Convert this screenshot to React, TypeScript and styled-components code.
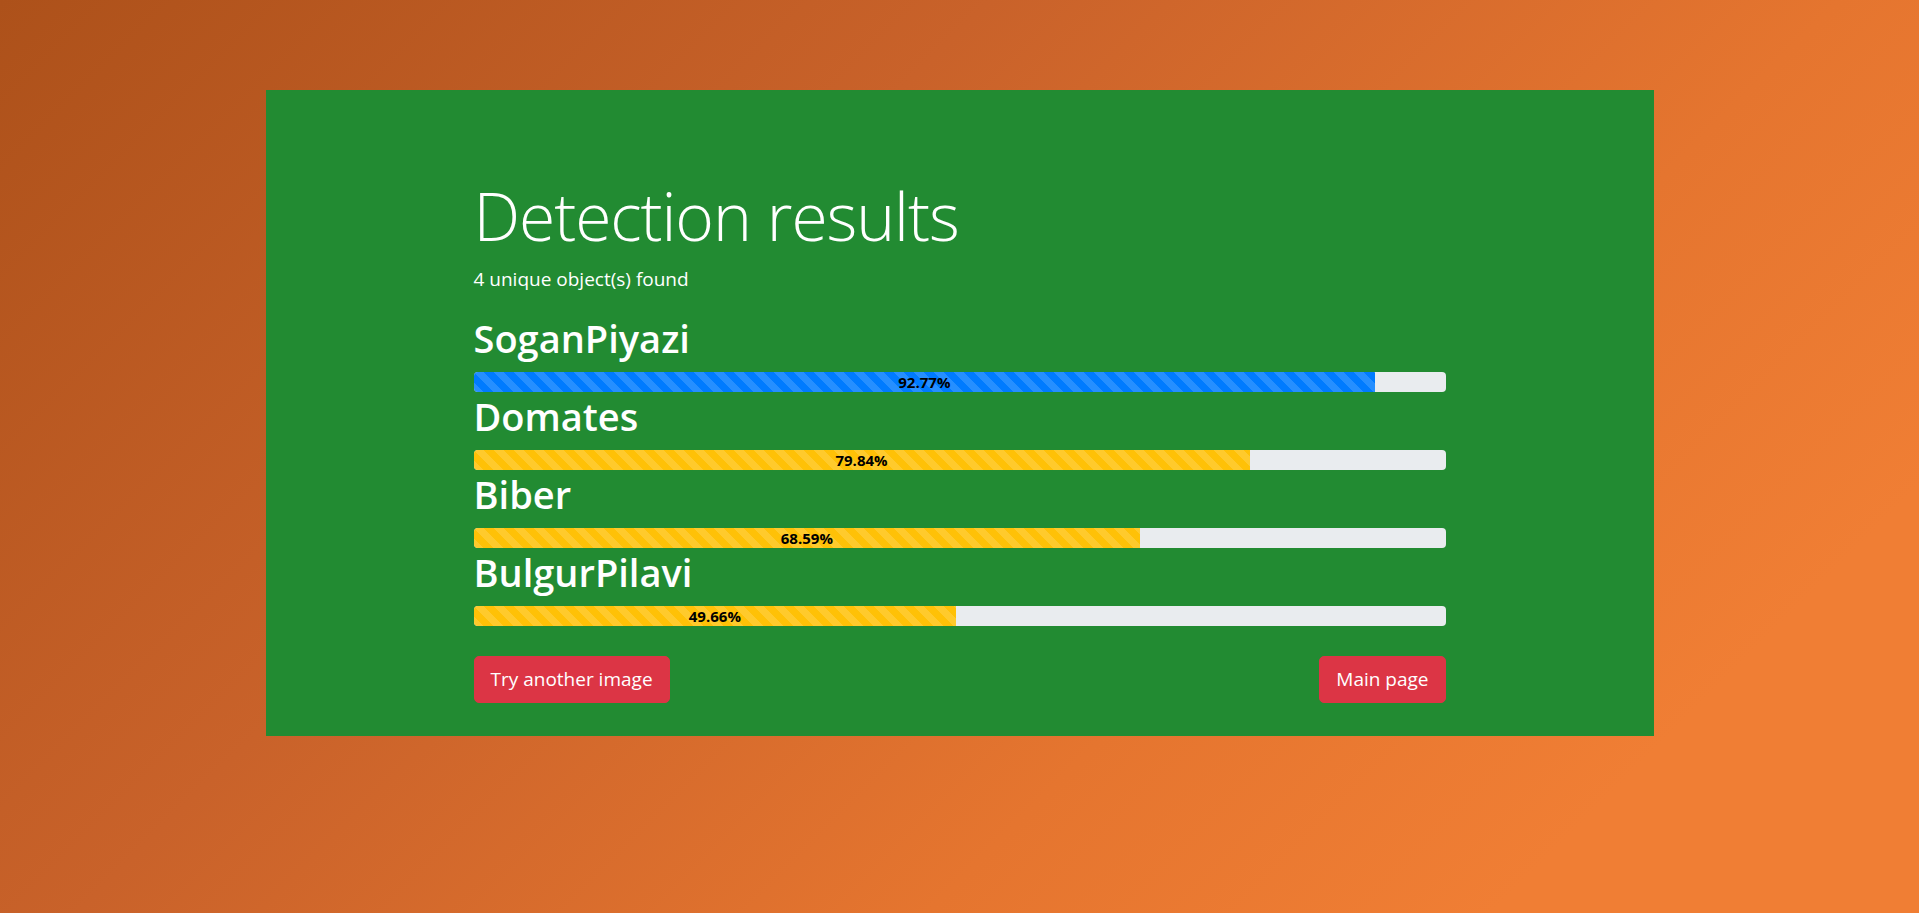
import styled, { createGlobalStyle } from 'styled-components';

const GlobalStyle = createGlobalStyle`
  html, body {
    margin: 0;
    padding: 0;
  }
  body {
    min-height: 913px;
    background: linear-gradient(135deg, #ad511a 0%, #c9622a 35%, #e5752f 65%, #f07e34 85%);
    font-family: "Open Sans", "Noto Sans", sans-serif;
    color: #ffffff;
  }
`;

const Page = styled.div`
  display: flex;
  justify-content: center;
  padding-top: 90px;
  min-height: 913px;
  box-sizing: border-box;
`;

const Panel = styled.section`
  width: 1388px;
  height: 646px;
  box-sizing: border-box;
  background: #228b32;
  padding: 86px 208px 0;
`;

const Title = styled.h1`
  margin: 0 0 10px;
  font-size: 66px;
  font-weight: 300;
  letter-spacing: -1.1px;
  line-height: 1.2;
`;

const Subtitle = styled.p`
  margin: 0 0 21px;
  font-size: 19px;
  line-height: 28px;
`;

const ResultList = styled.div`
  display: flex;
  flex-direction: column;
`;

const ResultName = styled.h2`
  margin: 0 0 9px;
  font-size: 38px;
  font-weight: 600;
  line-height: 49px;
`;

const Track = styled.div`
  display: flex;
  height: 20px;
  border-radius: 4px;
  overflow: hidden;
  background: #e9ecef;
`;

interface fillType {
  tone: 'primary' | 'warning';
}

const Fill = styled.div<fillType>`
  display: flex;
  align-items: center;
  justify-content: center;
  height: 100%;
  background-color: ${(props) => (props.tone === 'primary' ? '#007bff' : '#ffc107')};
  background-image: linear-gradient(
    45deg,
    rgba(255, 255, 255, 0.15) 25%,
    transparent 25%,
    transparent 50%,
    rgba(255, 255, 255, 0.15) 50%,
    rgba(255, 255, 255, 0.15) 75%,
    transparent 75%,
    transparent
  );
  background-size: 20px 20px;
  color: #000000;
  font-size: 15px;
  font-weight: 700;
  white-space: nowrap;
`;

const Actions = styled.div`
  display: flex;
  justify-content: space-between;
  margin-top: 30px;
`;

const RedButton = styled.button`
  font-family: "Open Sans", "Noto Sans", sans-serif;
  font-size: 19px;
  line-height: 29px;
  padding: 8px 16px;
  border: 1px solid #dc3545;
  border-radius: 5px;
  background: #dc3545;
  color: #ffffff;
  cursor: pointer;
`;

const results = [
  { name: 'SoganPiyazi', score: 92.77 },
  { name: 'Domates', score: 79.84 },
  { name: 'Biber', score: 68.59 },
  { name: 'BulgurPilavi', score: 49.66 },
];

export default function App() {
  return (
    <>
      <GlobalStyle />
      <Page>
        <Panel>
          <Title>Detection results</Title>
          <Subtitle>{results.length} unique object(s) found</Subtitle>
          <ResultList>
            {results.map((r) => (
              <div key={r.name}>
                <ResultName>{r.name}</ResultName>
                <Track>
                  <Fill
                    tone={r.score > 90 ? 'primary' : 'warning'}
                    style={{ width: `${r.score}%` }}
                  >
                    {r.score.toFixed(2)}%
                  </Fill>
                </Track>
              </div>
            ))}
          </ResultList>
          <Actions>
            <RedButton>Try another image</RedButton>
            <RedButton>Main page</RedButton>
          </Actions>
        </Panel>
      </Page>
    </>
  );
}
